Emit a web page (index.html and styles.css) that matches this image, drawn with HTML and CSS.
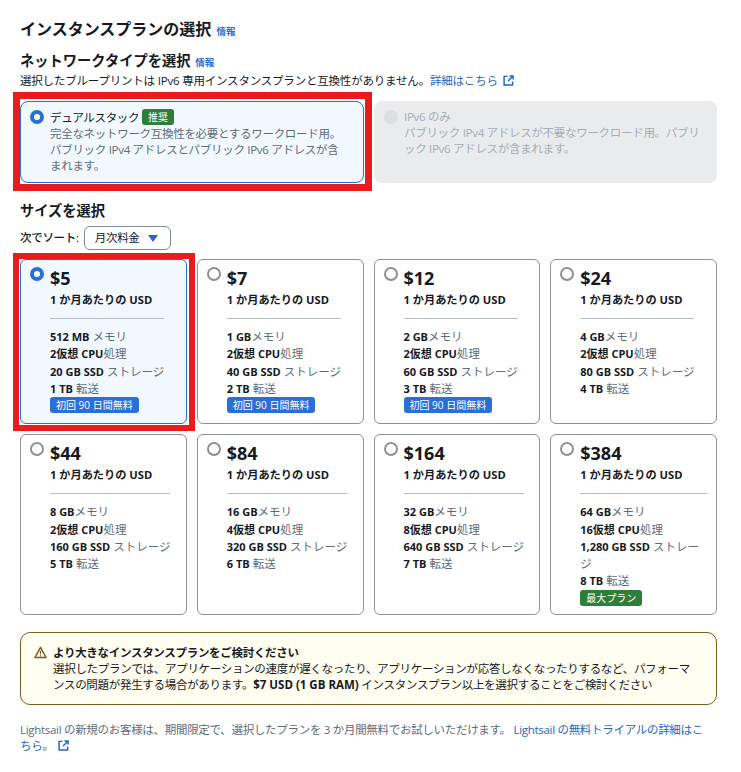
FILE: index.html
```html
<!DOCTYPE html>
<html lang="ja">
<head>
<meta charset="utf-8">
<title>インスタンスプランの選択</title>
<link rel="stylesheet" href="styles.css">
</head>
<body>
<svg class="defs" width="0" height="0"><defs>
<symbol id="ext" viewBox="0 0 12 12"><path d="M5 1.5H1.2v9.3h9.3V7" fill="none" stroke="currentColor" stroke-width="1.6"/><path d="M7 1h4v4M11 1 5.5 6.5" fill="none" stroke="currentColor" stroke-width="1.6"/></symbol>
</defs></svg>
<main class="page">
  <h1 class="title">インスタンスプランの選択 <a class="info">情報</a></h1>
  <h2 class="subtitle">ネットワークタイプを選択 <a class="info">情報</a></h2>
  <p class="note">選択したブループリントは IPv6 専用インスタンスプランと互換性がありません。<a class="link">詳細はこちら <svg class="ext"><use href="#ext"/></svg></a></p>

  <div class="networks">
    <div class="net selected marked-net">
      <span class="radio on"></span>
      <div>
        <div class="net-name">デュアルスタック <span class="badge green">推奨</span></div>
        <div class="net-desc">完全なネットワーク互換性を必要とするワークロード用。パブリック IPv4 アドレスとパブリック IPv6 アドレスが含まれます。</div>
      </div>
    </div>
    <div class="net disabled">
      <span class="radio off-dis"></span>
      <div>
        <div class="net-name">IPv6 のみ</div>
        <div class="net-desc">パブリック IPv4 アドレスが不要なワークロード用。パブリック IPv6 アドレスが含まれます。</div>
      </div>
    </div>
  </div>

  <h2 class="subtitle size">サイズを選択</h2>
  <div class="sort">
    <span class="sort-label">次でソート:</span>
    <span class="select">月次料金 <svg class="caret" viewBox="0 0 10 7"><path d="M0 0h10L5 7z" fill="#2a62c9"/></svg></span>
  </div>

  <div class="plans">
    <div class="plan selected marked-plan">
      <span class="radio on"></span>
      <div class="plan-body">
        <div class="price">$5</div><div class="per">1 か月あたりの USD</div><hr class="rule">
        <div class="spec"><b>512 MB</b> メモリ</div><div class="spec"><b>2仮想 CPU</b>処理</div><div class="spec"><b>20 GB SSD</b> ストレージ</div><div class="spec"><b>1 TB</b> 転送</div>
        <span class="badge blue">初回 90 日間無料</span>
      </div>
    </div>
    <div class="plan">
      <span class="radio"></span>
      <div class="plan-body">
        <div class="price">$7</div><div class="per">1 か月あたりの USD</div><hr class="rule">
        <div class="spec"><b>1 GB</b>メモリ</div><div class="spec"><b>2仮想 CPU</b>処理</div><div class="spec"><b>40 GB SSD</b> ストレージ</div><div class="spec"><b>2 TB</b> 転送</div>
        <span class="badge blue">初回 90 日間無料</span>
      </div>
    </div>
    <div class="plan">
      <span class="radio"></span>
      <div class="plan-body">
        <div class="price">$12</div><div class="per">1 か月あたりの USD</div><hr class="rule">
        <div class="spec"><b>2 GB</b>メモリ</div><div class="spec"><b>2仮想 CPU</b>処理</div><div class="spec"><b>60 GB SSD</b> ストレージ</div><div class="spec"><b>3 TB</b> 転送</div>
        <span class="badge blue">初回 90 日間無料</span>
      </div>
    </div>
    <div class="plan">
      <span class="radio"></span>
      <div class="plan-body">
        <div class="price">$24</div><div class="per">1 か月あたりの USD</div><hr class="rule">
        <div class="spec"><b>4 GB</b>メモリ</div><div class="spec"><b>2仮想 CPU</b>処理</div><div class="spec"><b>80 GB SSD</b> ストレージ</div><div class="spec"><b>4 TB</b> 転送</div>
      </div>
    </div>
    <div class="plan">
      <span class="radio"></span>
      <div class="plan-body">
        <div class="price">$44</div><div class="per">1 か月あたりの USD</div><hr class="rule">
        <div class="spec"><b>8 GB</b>メモリ</div><div class="spec"><b>2仮想 CPU</b>処理</div><div class="spec"><b>160 GB SSD</b> ストレージ</div><div class="spec"><b>5 TB</b> 転送</div>
      </div>
    </div>
    <div class="plan">
      <span class="radio"></span>
      <div class="plan-body">
        <div class="price">$84</div><div class="per">1 か月あたりの USD</div><hr class="rule">
        <div class="spec"><b>16 GB</b>メモリ</div><div class="spec"><b>4仮想 CPU</b>処理</div><div class="spec"><b>320 GB SSD</b> ストレージ</div><div class="spec"><b>6 TB</b> 転送</div>
      </div>
    </div>
    <div class="plan">
      <span class="radio"></span>
      <div class="plan-body">
        <div class="price">$164</div><div class="per">1 か月あたりの USD</div><hr class="rule">
        <div class="spec"><b>32 GB</b>メモリ</div><div class="spec"><b>8仮想 CPU</b>処理</div><div class="spec"><b>640 GB SSD</b> ストレージ</div><div class="spec"><b>7 TB</b> 転送</div>
      </div>
    </div>
    <div class="plan">
      <span class="radio"></span>
      <div class="plan-body">
        <div class="price">$384</div><div class="per">1 か月あたりの USD</div><hr class="rule">
        <div class="spec"><b>64 GB</b>メモリ</div><div class="spec"><b>16仮想 CPU</b>処理</div><div class="spec"><b>1,280 GB SSD</b> ストレージ</div><div class="spec"><b>8 TB</b> 転送</div>
        <span class="badge green">最大プラン</span>
      </div>
    </div>
  </div>

  <div class="alert">
    <svg class="warn" viewBox="0 0 14 14"><path d="M7 1.4 1 12.4h12z" fill="none" stroke="#7a5c24" stroke-width="1.6" stroke-linejoin="round"/><path d="M7 5v4M7 10v1.4" stroke="#7a5c24" stroke-width="1.4"/></svg>
    <div>
      <div class="alert-title">より大きなインスタンスプランをご検討ください</div>
      <div class="alert-text">選択したプランでは、アプリケーションの速度が遅くなったり、アプリケーションが応答しなくなったりするなど、パフォーマンスの問題が発生する場合があります。<b>$7 USD (1 GB RAM)</b> インスタンスプラン以上を選択することをご検討ください</div>
    </div>
  </div>

  <p class="foot">Lightsail の新規のお客様は、期間限定で、選択したプランを 3 か月間無料でお試しいただけます。 <a class="link">Lightsail の無料トライアルの詳細はこちら。 <svg class="ext"><use href="#ext"/></svg></a></p>
</main>
</body>
</html>
```

FILE: styles.css
```css
* { box-sizing: border-box; }
html, body { margin: 0; background: #fff; }
body {
  font-family: "Open Sans", "Noto Sans CJK JP", sans-serif;
  font-size: 11.5px;
  letter-spacing: -0.3px;
  line-height: 16px;
  color: #16191f;
}
.defs { position: absolute; }
.page { width: 741px; padding: 19px 24px 0 20px; }
.title { margin: 0; font-size: 16px; letter-spacing: 0; line-height: 20px; font-weight: 700; }
.subtitle { margin: 10px 0 0; font-size: 14.25px; letter-spacing: 0; line-height: 18px; font-weight: 700; }
.info { font-size: 9.5px; font-weight: 700; color: #2a6fd1; margin-left: 1px; }
.note { margin: 1px 0 0; letter-spacing: -0.2px; }
.link { color: #1f66c9; }
.ext { width: 11px; height: 11px; vertical-align: -1px; margin-left: 2px; color: #1f66c9; }

.networks { display: grid; grid-template-columns: 344px 343px; gap: 10px; margin-top: 12px; }
.net {
  position: relative;
  display: flex;
  gap: 6px;
  height: 82px;
  padding: 7px 9px;
  border: 1px solid transparent;
  border-radius: 8px;
}
.net-name { line-height: 16px; }
.net-desc { color: #5f6b7a; }
.net.selected { padding-right: 16px; }
.net.selected, .plan.selected { background: #f1f8ff; border-color: #2a6fd1; }
.net.disabled { background: #e9ebed; color: #9ba7b6; }
.net.disabled .net-name, .net.disabled .net-desc { color: #a7adb5; }
.marked-net::after, .marked-plan::after {
  content: "";
  position: absolute;
  border: 7px solid #e81c1c;
  pointer-events: none;
}
.marked-net::after { inset: -10px -9px -9px -8px; }
.marked-plan::after { inset: -7px -9px -8px -8px; border-width: 6px; }

.radio {
  flex: none;
  width: 14px;
  height: 14px;
  margin-top: 1px;
  border-radius: 50%;
  border: 2px solid #8d9096;
  background: #fff;
}
.radio.on { border: 4px solid #2a6fd9; }
.radio.off-dis { border: none; background: #dcdee2; }

.badge {
  display: inline-block;
  padding: 0 6px;
  border-radius: 3px;
  color: #fff;
  font-size: 10px;
  letter-spacing: 0;
  line-height: 16px;
  vertical-align: 1px;
}
.badge.green { background: #2f7d3a; }
.badge.blue { background: #2a6fd9; }

.size { margin-top: 19px; }
.sort { display: flex; align-items: center; gap: 5px; margin-top: 6px; }
.sort-label { font-weight: 500; }
.select {
  display: inline-flex;
  align-items: center;
  gap: 8px;
  height: 24px;
  padding: 0 12px 0 10px;
  border: 1px solid #7d8998;
  border-radius: 6px;
}
.caret { width: 10px; height: 7px; }

.plans {
  display: grid;
  grid-template-columns: repeat(4, 1fr);
  grid-template-rows: 165.25px 181px;
  gap: 10px;
  margin-top: 9px;
}
.plan {
  position: relative;
  display: flex;
  gap: 6px;
  padding: 6px 9px 6px 9px;
  border: 1px solid #8d9096;
  border-radius: 6px;
}
.plan-body { flex: 0 1 auto; min-width: 0; letter-spacing: 0; }
.price { font-size: 18px; line-height: 24px; font-weight: 700; }
.per { font-size: 11.2px; font-weight: 700; line-height: 16px; margin-top: 2px; }
.rule { border: 0; border-top: 1px solid #b6bec9; margin: 10px 0 9px; }
.spec { font-size: 11.5px; line-height: 17.3px; color: #5f6b7a; }
.spec b { color: #16191f; font-weight: 700; font-size: 11px; }
.plan .badge { display: block; width: fit-content; margin-top: 0; }

.alert {
  display: flex;
  gap: 6px;
  height: 73px;
  margin-top: 17px;
  padding: 12px 24px 12px 13px;
  border: 1px solid #7a5c24;
  border-radius: 10px;
  background: #fffef0;
}
.warn { flex: none; width: 13px; height: 13px; margin-top: 1px; }
.alert-title { font-weight: 700; }
.alert-text b { font-size: 11.5px; letter-spacing: 0; }
.foot { margin: 17px 8px 0 0; color: #5f6b7a; }
```
